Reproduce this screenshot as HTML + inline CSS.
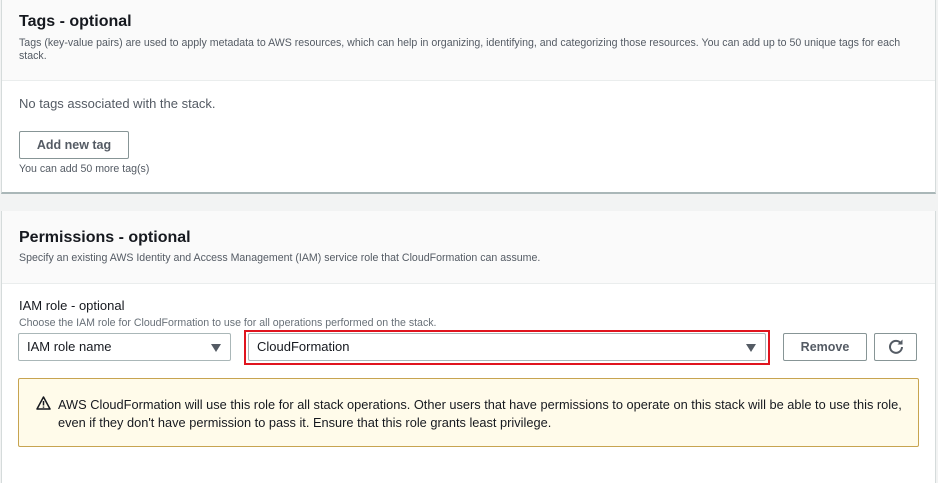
<!DOCTYPE html>
<html><head><meta charset="utf-8"><style>
body{margin:0;width:938px;height:483px;background:#f2f3f3;font-family:"Liberation Sans",sans-serif;color:#16191f;position:relative;overflow:hidden}
.a{position:absolute;white-space:nowrap}
.card{position:absolute;left:1px;width:935px;background:#fff;border-left:1px solid #d5dbdb;border-right:1px solid #d5dbdb;box-sizing:border-box}
.hd{position:absolute;left:0;right:0;top:0;background:#fafafa;border-bottom:1px solid #eaeded}
h2{margin:0;font-size:16px;font-weight:bold}
.d{font-size:10.6px;color:#545b64}
.btn{position:absolute;border:1px solid #879596;border-radius:2px;background:#fff;font-weight:bold;font-size:12.5px;color:#545b64;text-align:center;box-sizing:border-box}
.sel{position:absolute;border:1px solid #aab7b8;border-radius:2px;background:#fff;box-sizing:border-box;font-size:13px;padding-left:8px}
.tri{position:absolute;width:0;height:0;border-left:5.5px solid transparent;border-right:5.5px solid transparent;border-top:8px solid #545b64}
</style></head><body>
<div class="card" style="top:0;height:194px;border-bottom:2px solid #aab7b8">
 <div class="hd" style="height:80px"></div>
</div>
<div class="a" style="left:19px;top:13px"><h2>Tags - optional</h2></div>
<div class="a d" style="left:19px;top:37px;line-height:13px;white-space:normal;width:900px">Tags (key-value pairs) are used to apply metadata to AWS resources, which can help in organizing, identifying, and categorizing those resources. You can add up to 50 unique tags for each stack.</div>
<div class="a" style="left:19px;top:96px;font-size:13px;color:#545b64">No tags associated with the stack.</div>
<div class="btn" style="left:19px;top:131px;width:110px;height:28px;line-height:26px">Add new tag</div>
<div class="a d" style="left:19px;top:163px">You can add 50 more tag(s)</div>

<div class="card" style="top:211px;height:272px">
 <div class="hd" style="height:72px"></div>
</div>
<div class="a" style="left:19px;top:229px"><h2>Permissions - optional</h2></div>
<div class="a d" style="left:19px;top:252px">Specify an existing AWS Identity and Access Management (IAM) service role that CloudFormation can assume.</div>
<div class="a" style="left:19px;top:298px;font-size:13px">IAM role - optional</div>
<div class="a d" style="left:19px;top:317px;color:#687078">Choose the IAM role for CloudFormation to use for all operations performed on the stack.</div>
<div class="sel" style="left:18px;top:333px;width:213px;height:28px;line-height:26px">IAM role name<div class="tri" style="right:9px;top:10px"></div></div>
<div style="position:absolute;left:244px;top:330px;width:526px;height:35px;border:2px solid #e0141e;box-sizing:border-box"></div>
<div class="sel" style="left:248px;top:333px;width:518px;height:28px;line-height:26px">CloudFormation<div class="tri" style="right:9px;top:10px"></div></div>
<div class="btn" style="left:783px;top:333px;width:84px;height:28px;line-height:26px">Remove</div>
<div class="btn" style="left:874px;top:333px;width:43px;height:28px">
<svg width="18" height="18" viewBox="0 0 18 18" style="margin-top:4px"><path d="M14 5.5A6 6 0 1 0 15 9" fill="none" stroke="#545b64" stroke-width="2"/><path d="M15.5 1.5v5h-5z" fill="#545b64"/></svg></div>
<div style="position:absolute;left:18px;top:378px;width:901px;height:69px;background:#fffbea;border:1px solid #c7a450;border-radius:2px;box-sizing:border-box"></div>
<svg class="a" style="left:36px;top:396px" width="15" height="14" viewBox="0 0 15 14"><path d="M7.5 1L14 13H1z" fill="none" stroke="#16191f" stroke-width="1.5" stroke-linejoin="round"/><path d="M7.5 5v4.5M7.5 10.5v1.3" stroke="#16191f" stroke-width="1.5"/></svg>
<div class="a" style="left:58px;top:396px;font-size:12.8px;line-height:18px">AWS CloudFormation will use this role for all stack operations. Other users that have permissions to operate on this stack will be able to use this role,<br>even if they don't have permission to pass it. Ensure that this role grants least privilege.</div>
</body></html>
